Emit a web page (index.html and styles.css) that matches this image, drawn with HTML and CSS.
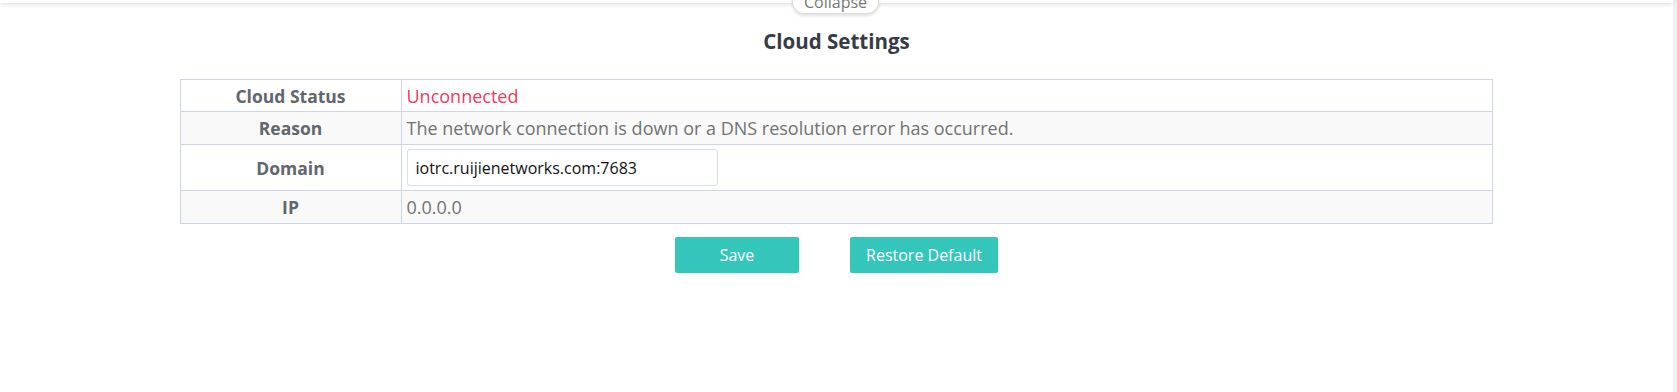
FILE: index.html
```html
<!DOCTYPE html>
<html lang="en">
<head>
    <meta charset="UTF-8">
    <title>Cloud Settings</title>
    <link rel="stylesheet" href="styles.css">
</head>
<body>
    <div class="page">
        <div class="top-bar">
            <div class="collapse-tab">Collapse</div>
        </div>
        <div class="content">
            <h1 class="title">Cloud Settings</h1>
            <table class="settings-table">
                <tr>
                    <th>Cloud Status</th>
                    <td class="status-error">Unconnected</td>
                </tr>
                <tr class="alt">
                    <th>Reason</th>
                    <td>The network connection is down or a DNS resolution error has occurred.</td>
                </tr>
                <tr class="tall">
                    <th>Domain</th>
                    <td><input class="text-input" type="text" value="iotrc.ruijienetworks.com:7683"></td>
                </tr>
                <tr class="alt">
                    <th>IP</th>
                    <td>0.0.0.0</td>
                </tr>
            </table>
            <div class="actions">
                <button class="btn btn-save">Save</button>
                <button class="btn btn-restore">Restore Default</button>
            </div>
        </div>
    </div>
</body>
</html>
```

FILE: styles.css
```css
:root {
    --border-color: #cbd5e6;
    --text-color: #666;
    --teal: #35c6bb;
    --font: "Open Sans", "Noto Sans", sans-serif;
}

html, body {
    margin: 0;
    padding: 0;
    background: #fff;
}

body {
    font-family: var(--font);
    color: var(--text-color);
    width: 1677px;
    height: 392px;
    overflow: hidden;
}

.page {
    width: 1673px;
    height: 392px;
    border-right: 4px solid #f0f0f0;
}

.top-bar {
    position: relative;
    height: 3px;
    background: #fff;
    box-shadow: 0 1px 4px rgba(0, 0, 0, 0.18);
}

/* tab hanging over the top bar */
.collapse-tab {
    position: absolute;
    left: 792px;
    top: -10px;
    width: 87px;
    height: 24px;
    box-sizing: border-box;
    padding-top: 4px;
    border: 1px solid #dcdcdc;
    border-top: none;
    border-radius: 0 0 12px 12px;
    background: #fff;
    box-shadow: 0 2px 3px rgba(0, 0, 0, 0.12);
    text-align: center;
    font-size: 16px;
    line-height: 16px;
    color: #777;
    overflow: hidden;
    z-index: 2;
}

.content {
    display: flex;
    flex-direction: column;
    align-items: center;
}

.title {
    margin: 25px 0 0;
    font-size: 20.5px;
    line-height: 26px;
    font-weight: 700;
    color: #363b45;
}

.settings-table {
    margin-top: 25px;
    margin-right: 1px;
    width: 1313px;
    border-collapse: collapse;
    font-size: 18px;
}

.settings-table th,
.settings-table td {
    border: 1px solid var(--border-color);
    height: 31px;
    padding: 0;
}

.settings-table th {
    width: 220px;
    text-align: center;
    font-size: 17.5px;
    font-weight: 700;
    color: #62666d;
}

.settings-table td {
    padding-left: 5px;
    text-align: left;
    color: #727272;
}

.settings-table tr.alt {
    background: #f9f9f9;
}

.settings-table tr.alt th,
.settings-table tr.alt td {
    height: 32px;
}

.settings-table tr.tall th,
.settings-table tr.tall td {
    height: 45px;
}

.status-error {
    color: #f03a5f !important;
}

.text-input {
    display: block;
    width: 311px;
    height: 37px;
    box-sizing: border-box;
    border: 1px solid #d6dce8;
    border-radius: 3px;
    padding: 0 8px;
    font-family: var(--font);
    font-size: 16px;
    color: #111;
    outline: none;
}

.actions {
    display: flex;
    gap: 51px;
    margin-top: 13px;
}

.btn {
    height: 36px;
    border: none;
    border-radius: 2px;
    background: var(--teal);
    color: #fff;
    font-family: var(--font);
    font-size: 16px;
    cursor: pointer;
}

.btn-save {
    width: 124px;
}

.btn-restore {
    width: 148px;
}
```
